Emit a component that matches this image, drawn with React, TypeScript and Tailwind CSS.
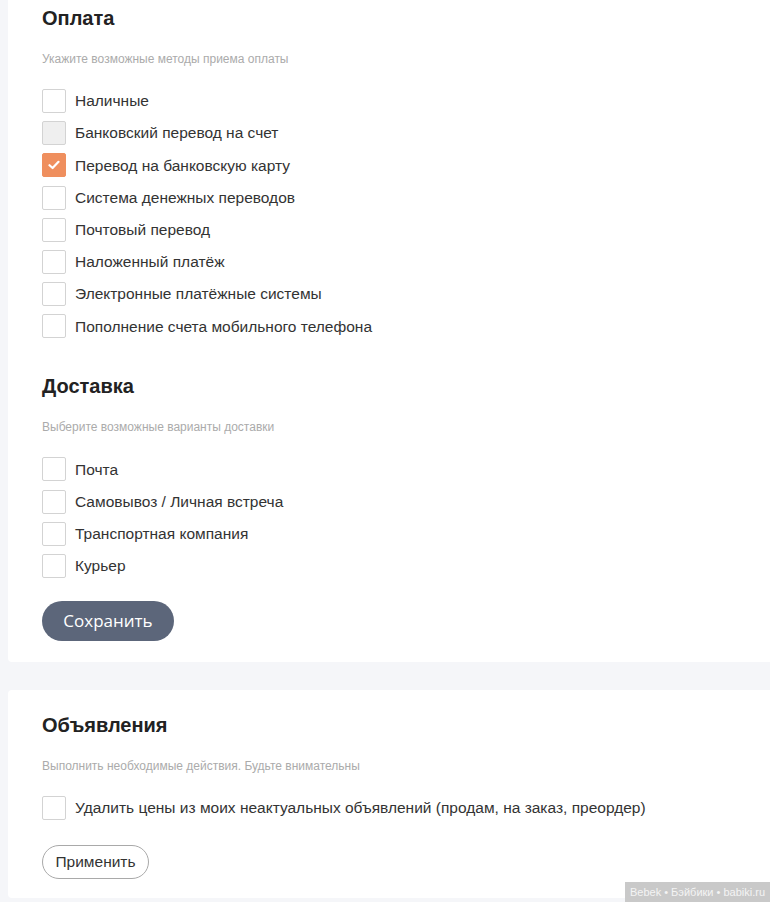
import React, { useState } from 'react';

type Option = { label: string; checked?: boolean; disabled?: boolean };

const payment: Option[] = [
	{ label: 'Наличные' },
	{ label: 'Банковский перевод на счет', disabled: true },
	{ label: 'Перевод на банковскую карту', checked: true },
	{ label: 'Система денежных переводов' },
	{ label: 'Почтовый перевод' },
	{ label: 'Наложенный платёж' },
	{ label: 'Электронные платёжные системы' },
	{ label: 'Пополнение счета мобильного телефона' },
];

const delivery: Option[] = [
	{ label: 'Почта' },
	{ label: 'Самовывоз / Личная встреча' },
	{ label: 'Транспортная компания' },
	{ label: 'Курьер' },
];

const CheckRow: React.FC<{ opt: Option }> = ({ opt }) => {
	const [checked, setChecked] = useState(!!opt.checked);
	let box = 'bg-white border border-[#d3d3d3]';
	if (opt.disabled) box = 'bg-[#efefef] border border-[#d3d3d3]';
	if (checked) box = 'bg-[#ef8f5e] border border-[#ef8f5e]';

	return (
		<label className="flex items-center h-6 cursor-pointer" onClick={() => !opt.disabled && setChecked(!checked)}>
			<span className={`w-6 h-6 rounded-[2px] flex items-center justify-center shrink-0 ${box}`}>
				{checked && (
					<svg width="12" height="10" viewBox="0 0 12 10" fill="none">
						<path d="M1.5 5.2 L4.6 8 L10.5 1.8" stroke="white" strokeWidth="2.2" strokeLinecap="round" strokeLinejoin="round" />
					</svg>
				)}
			</span>
			<span className="ml-[9px] text-[15.5px] text-[#333] leading-none">{opt.label}</span>
		</label>
	);
};

const Section: React.FC<{ title: string; hint: string; options: Option[] }> = ({ title, hint, options }) => (
	<div>
		<h2 className="text-[20px] font-bold text-[#222] leading-[28px]">{title}</h2>
		<p className="mt-[20px] text-[12px] text-[#ababab] leading-[14px]">{hint}</p>
		<div className="mt-[23px] flex flex-col gap-[8.2px]">
			{options.map((o) => (
				<CheckRow key={o.label} opt={o} />
			))}
		</div>
	</div>
);

const App: React.FC = () => {
	return (
		<div className="min-h-screen bg-[#f5f6f9] pl-2 relative overflow-hidden font-['Liberation_Sans',Arial,sans-serif]">
			{/* Settings card: payment + delivery */}
			<div className="bg-white rounded-l-[4px] -mt-[17px] pt-[21px] pb-[21px] px-[34px]">
				<Section title="Оплата" hint="Укажите возможные методы приема оплаты" options={payment} />
				<div className="mt-[34px]">
					<Section title="Доставка" hint="Выберите возможные варианты доставки" options={delivery} />
				</div>
				<button className="mt-[23px] h-10 w-[132px] rounded-full bg-[#5c667a] text-white text-[17px] font-['Open_Sans',sans-serif]">
					Сохранить
				</button>
			</div>

			{/* Listings card */}
			<div className="mt-[28px] bg-white rounded-l-[4px] pt-[21px] pb-[19px] px-[34px]">
				<h2 className="text-[20px] font-bold text-[#222] leading-[28px]">Объявления</h2>
				<p className="mt-[20px] text-[12px] text-[#ababab] leading-[14px]">Выполнить необходимые действия. Будьте внимательны</p>
				<div className="mt-[23px]">
					<CheckRow opt={{ label: 'Удалить цены из моих неактуальных объявлений (продам, на заказ, преордер)' }} />
				</div>
				<button className="mt-[25px] h-[34px] w-[107px] rounded-full border border-[#a9a9a9] bg-white text-[15.5px] text-[#333]">
					Применить
				</button>
			</div>

			<div className="absolute right-0 top-[882px] w-[145px] h-5 bg-[#c9c9c9] text-[#f4f4f4] text-[11px] leading-5 text-center">
				Bebek • Бэйбики • babiki.ru
			</div>
		</div>
	);
};

export default App;
